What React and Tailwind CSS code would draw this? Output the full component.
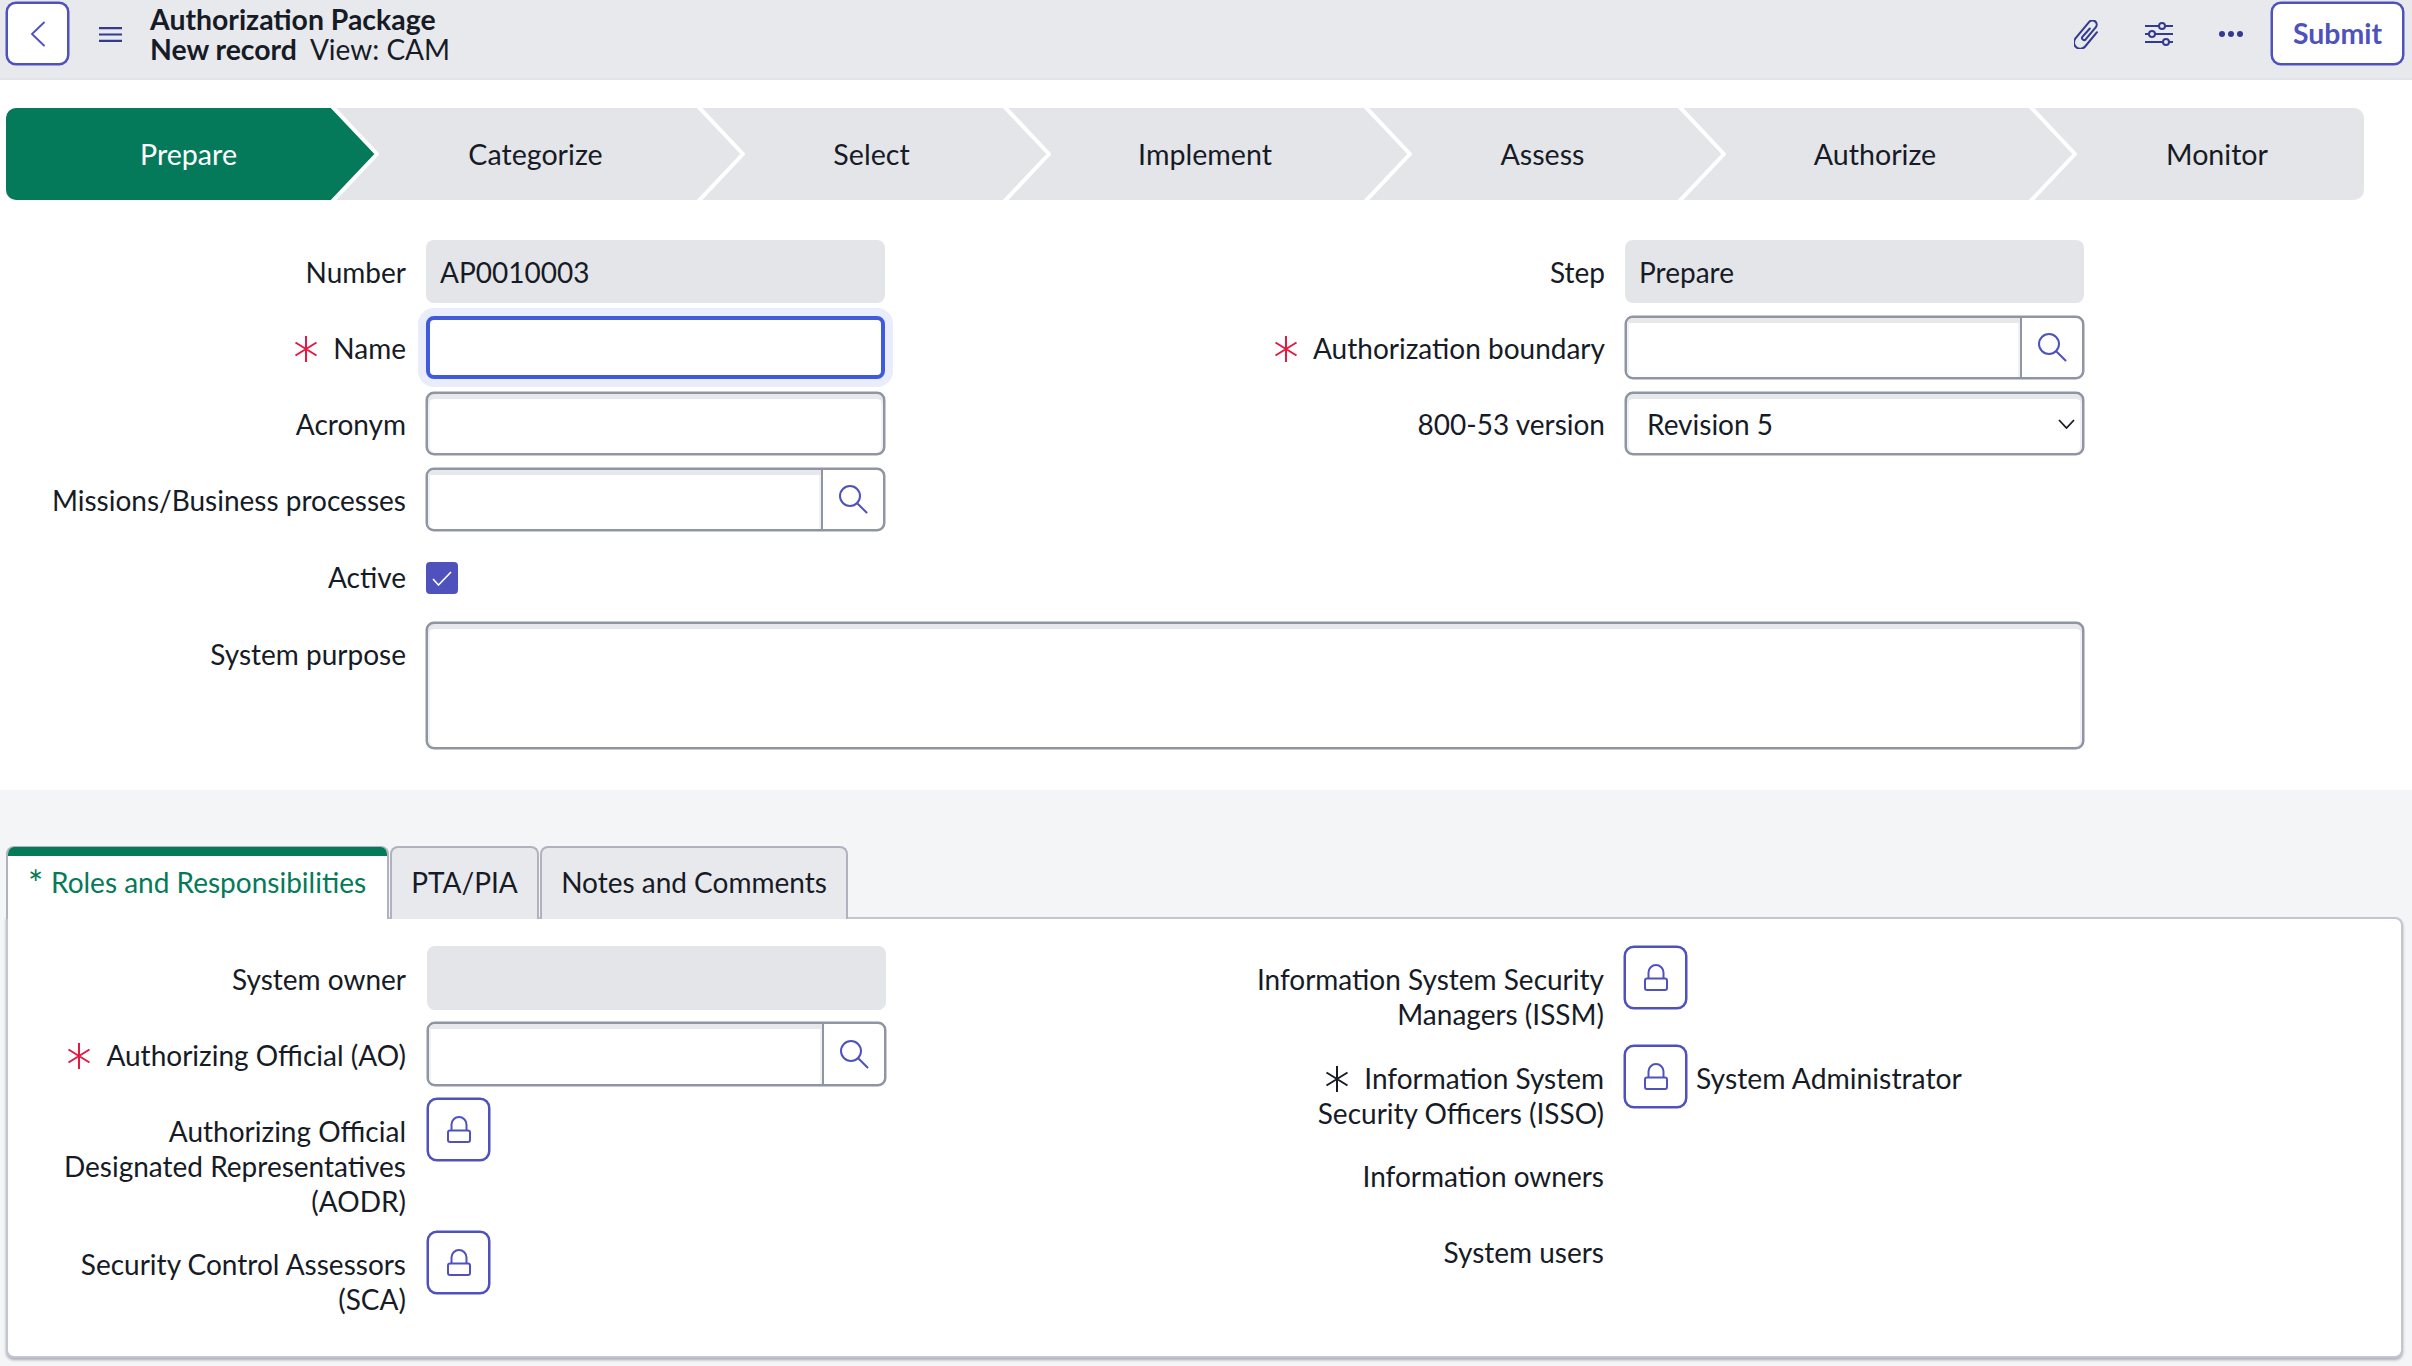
import React from "react";

const INDIGO = "#4f52bd";
const NAVY = "#343a8e";

const Star = ({ color = "#e5193f" }) => (
  <svg width="24" height="26" viewBox="0 0 24 26" className="mr-[15px] inline-block align-[-3px]" fill="none" stroke={color} strokeWidth="2">
    <path d="M12 0V26M1.5 6.5L22.5 19.5M1.5 19.5L22.5 6.5" />
  </svg>
);

const SearchIcon = () => (
  <svg width="29" height="29" viewBox="0 0 29 29" fill="none" stroke={INDIGO} strokeWidth="2">
    <circle cx="11" cy="11" r="10" />
    <path d="M18.2 18.2L27.5 27.5" strokeLinecap="round" />
  </svg>
);

const LockIcon = () => (
  <svg width="24" height="27" viewBox="0 0 24 27" fill="none" stroke={INDIGO} strokeWidth="2">
    <rect x="1" y="14.5" width="22" height="11.5" rx="2" />
    <path d="M4.5 14V8.5a7.5 7.5 0 0 1 15 0V14" />
  </svg>
);

const Chevron = ({ active }) => (
  <svg width="50" height="92" viewBox="0 0 50 92" className="absolute left-full top-0 z-10" fill="none">
    {active && <path d="M0 0H2.5L46 46L2.5 92H0Z" fill="#057a5a" />}
    <path d="M0.7 -2L46 46L0.7 94" stroke="#fff" strokeWidth="4" strokeLinejoin="round" />
  </svg>
);

const Lbl = ({ children, star, starColor, className = "" }) => (
  <div className={`text-right ${className}`}>
    {star && <Star color={starColor} />}
    {children}
  </div>
);

const inner = "shadow-[inset_0_5px_0_#e6e8e9,inset_2px_0_0_#f0f1f2,inset_-2px_0_0_#f0f1f2]";
const box = "rounded-[8px] border-2 border-[#8f95a3] bg-white shadow-[inset_0_5px_0_#e6e8e9,inset_2px_0_0_#f0f1f2,inset_-2px_0_0_#f0f1f2,0_0_0_0.5px_#8f95a3]";
const ro = "flex h-[63px] items-center rounded-[8px] bg-[#e4e5e9] px-[14px] pt-[2px]";
const action = "rounded-[10px] border-2 border-[#4f52bd] bg-white shadow-[0_0_0_0.5px_#4f52bd]";

const Lookup = ({ h = "h-[63px]" }) => (
  <div className={`flex overflow-hidden rounded-[8px] border-2 border-[#8f95a3] bg-white shadow-[0_0_0_0.5px_#8f95a3] ${h}`}>
    <div className={`flex-1 ${inner}`} />
    <div className="flex w-[62px] items-center justify-center border-l-2 border-[#8f95a3]">
      <SearchIcon />
    </div>
  </div>
);

const Lock = () => (
  <div className={`flex h-[63px] w-[63px] shrink-0 items-center justify-center ${action}`}>
    <LockIcon />
  </div>
);

const steps = [
  { t: "Prepare", c: "w-[325px] pl-[40px] bg-[#057a5a] text-white rounded-l-[10px]" },
  { t: "Categorize", c: "w-[366px] pl-[43px]" },
  { t: "Select", c: "w-[306px] pl-[43px]" },
  { t: "Implement", c: "w-[361px] pl-[43px]" },
  { t: "Assess", c: "w-[314px] pl-[43px]" },
  { t: "Authorize", c: "w-[351px] pl-[43px]" },
  { t: "Monitor", c: "w-[335px] pl-[41px]" },
];

export default function App() {
  return (
    <div className="flex min-h-screen w-full flex-col overflow-hidden bg-white font-['Lato',sans-serif] text-[28px] leading-[35px] text-[#161b26]">
      {/* Header */}
      <header className="flex h-[80px] shrink-0 items-start border-b-[2px] border-[#e2e3e8] bg-[#e8e9ed] pt-[2px]">
        <button className={`ml-[6px] flex h-[63px] w-[63px] items-center justify-center ${action}`}>
          <svg width="16" height="26" viewBox="0 0 16 26" fill="none" stroke={INDIGO} strokeWidth="1.9">
            <path d="M14 1.5L2 13L14 24.5" strokeLinecap="round" />
          </svg>
        </button>
        <svg width="23" height="15" viewBox="0 0 23 15" className="ml-[30px] mt-[25px]" stroke={NAVY} strokeWidth="2.2">
          <path d="M0 1.2H23M0 7.5H23M0 13.8H23" />
        </svg>
        <div className="ml-[28px] mt-[2px] leading-[30px]">
          <div className="text-[28.4px] font-bold">Authorization Package</div>
          <div>
            <span className="text-[28.4px] font-bold">New record</span>
            <span className="ml-[13px]">View: CAM</span>
          </div>
        </div>
        <div className="ml-auto flex items-start">
          <svg width="26" height="29" viewBox="0.8 2.4 21.7 24.2" className="mt-[18px]" fill="none" stroke={NAVY} strokeWidth="1.7">
            <path d="M14 9.5L7.8 16.4a1.75 1.75 0 0 0 2.7 2.2L18.9 8.5a3.5 3.5 0 0 0-5.4-4.5L2 17.8a5.25 5.25 0 0 0 8.1 6.7L20 12.6" strokeLinecap="round" />
          </svg>
          <svg width="28" height="24" viewBox="0 0 28 24" className="ml-[45px] mt-[20px]" fill="none" stroke={NAVY} strokeWidth="2">
            <path d="M0 4H28M0 12H28M0 20H28" />
            <circle cx="17" cy="4" r="3" fill="#e8e9ed" />
            <circle cx="7" cy="12" r="3" fill="#e8e9ed" />
            <circle cx="21" cy="20" r="3" fill="#e8e9ed" />
          </svg>
          <svg width="24" height="8" viewBox="0 0 24 8" className="ml-[46px] mt-[28px]" fill={NAVY}>
            <circle cx="3" cy="4" r="3" />
            <circle cx="12" cy="4" r="3" />
            <circle cx="21" cy="4" r="3" />
          </svg>
          <button className={`ml-[28px] mr-[8px] flex h-[63px] w-[133px] items-center justify-center text-[28.4px] font-bold text-[#4f52bd] ${action}`}>
            Submit
          </button>
        </div>
      </header>

      {/* Stepper */}
      <nav className="ml-[6px] mt-[28px] flex h-[92px] w-[2358px] shrink-0 rounded-[10px] bg-[#e4e5e9] text-[28.6px]">
        {steps.map((s, i) => (
          <div key={s.t} className={`relative flex h-full items-center justify-center ${s.c}`}>
            <span>{s.t}</span>
            {i < steps.length - 1 && <Chevron active={i === 0} />}
          </div>
        ))}
      </nav>

      {/* Form */}
      <section className="h-[590px] shrink-0 pt-[40px]">
        <div className="flex w-[2084px]">
          <div className="flex w-[885px] flex-col gap-[13px]">
            <Row label="Number"><div className={ro}>AP0010003</div></Row>
            <Row label="Name" star>
              <div className="h-[63px] rounded-[8px] border-[4px] border-[#3f5bdc] bg-white shadow-[0_0_0_8px_#e9edfb]" />
            </Row>
            <Row label="Acronym"><div className={`${box} h-[63px]`} /></Row>
            <Row label="Missions/Business processes"><Lookup /></Row>
            <div className="flex h-[65px] gap-[20px]">
              <Lbl className="w-[406px] shrink-0 pt-[16px]">Active</Lbl>
              <div className="mt-[18px] flex h-[32px] w-[32px] items-center justify-center rounded-[4px] bg-[#4f52bd]">
                <svg width="20" height="15" viewBox="0 0 20 15" fill="none" stroke="#fff" strokeWidth="1.6">
                  <path d="M1 8L6.5 14L19 1" />
                </svg>
              </div>
            </div>
          </div>
          <div className="flex flex-1 flex-col gap-[13px]">
            <RowR label="Step"><div className={ro}>Prepare</div></RowR>
            <RowR label="Authorization boundary" star><Lookup /></RowR>
            <RowR label="800-53 version">
              <div className={`${box} flex h-[63px] items-center justify-between pl-[20px] pr-[7px]`}>
                <span className="pt-[1px]">Revision 5</span>
                <svg width="17" height="10" viewBox="0 0 17 10" fill="none" stroke="#161b26" strokeWidth="1.8">
                  <path d="M1 1L8.5 9L16 1" />
                </svg>
              </div>
            </RowR>
          </div>
        </div>
        <div className="mt-[13px] flex w-[2084px] gap-[20px]">
          <Lbl className="w-[406px] shrink-0 pt-[14.5px]">System purpose</Lbl>
          <div className={`${box} h-[127px] flex-1`} />
        </div>
      </section>

      {/* Tabs */}
      <section className="flex flex-1 flex-col bg-[#f4f5f7] pb-[9px] pt-[56px]">
        <div className="relative z-10 -mb-[2px] ml-[6px] flex h-[73px] gap-[1px]">
          <div className="flex w-[383px] items-start overflow-hidden rounded-t-[8px] border-x-[2px] border-t border-[#b0b3bf] bg-white">
            <div className="flex w-full flex-col">
              <div className="h-[9px] bg-[#057a5a]" />
              <div className="flex pl-[20px] pt-[9px] text-[#057a5a]">
                <span className="w-[23px] text-[36px] leading-[36px]">*</span>
                <span>Roles and Responsibilities</span>
              </div>
            </div>
          </div>
          <div className="flex w-[149px] items-center justify-center rounded-t-[8px] border-[2px] border-b-0 border-[#b0b3bf] bg-[#e8e9ed] pb-[2px]">PTA/PIA</div>
          <div className="flex w-[308px] items-center justify-center rounded-t-[8px] border-[2px] border-b-0 border-[#b0b3bf] bg-[#e8e9ed] pb-[2px]">Notes and Comments</div>
        </div>
        <div className="ml-[6px] mr-[9px] flex h-[441px] rounded-b-[8px] rounded-tr-[8px] border-[2px] border-[#c3c6cf] bg-white pt-[27px] shadow-[0_2px_3px_#a9acb8]">
          <div className="flex w-[878px] shrink-0 flex-col gap-[12px]">
            <PRow label="System owner"><div className="h-[64px] w-[459px] rounded-[8px] bg-[#e4e5e9]" /></PRow>
            <PRow label="Authorizing Official (AO)" star>
              <div className="w-[459px]"><Lookup h="h-[64px]" /></div>
            </PRow>
            <PRow label={<>Authorizing Official<br />Designated Representatives<br />(AODR)</>}><Lock /></PRow>
            <PRow label={<>Security Control Assessors<br />(SCA)</>}><Lock /></PRow>
          </div>
          <div className="flex flex-1 flex-col gap-[12px]">
            <QRow label={<>Information System Security<br />Managers (ISSM)</>} extra="pb-[1px]"><Lock /></QRow>
            <QRow label={<><Star color="#161b26" />Information System<br />Security Officers (ISSO)</>}>
              <Lock />
              <span className="ml-[9px] mt-[16px] text-[28.3px]">System Administrator</span>
            </QRow>
            <QRow label="Information owners" />
            <QRow label="System users" />
          </div>
        </div>
      </section>
    </div>
  );
}

function Row({ label, star, children }) {
  return (
    <div className="flex min-h-[63px] gap-[20px]">
      <Lbl star={star} className="w-[406px] shrink-0 pt-[14.5px]">{label}</Lbl>
      <div className="flex-1">{children}</div>
    </div>
  );
}

function RowR({ label, star, children }) {
  return (
    <div className="flex min-h-[63px] gap-[20px]">
      <Lbl star={star} className="w-[720px] shrink-0 pt-[14.5px]">{label}</Lbl>
      <div className="flex-1">{children}</div>
    </div>
  );
}

function PRow({ label, star, children }) {
  return (
    <div className="flex min-h-[64px] gap-[21px]">
      <Lbl star={star} className="w-[398px] shrink-0 pt-[16px]">{label}</Lbl>
      <div>{children}</div>
    </div>
  );
}

function QRow({ label, children, extra = "" }) {
  return (
    <div className="flex min-h-[64px] gap-[20px]">
      <Lbl className={`w-[718px] shrink-0 pt-[16px] ${extra}`}>{label}</Lbl>
      <div className="flex items-start">{children}</div>
    </div>
  );
}
